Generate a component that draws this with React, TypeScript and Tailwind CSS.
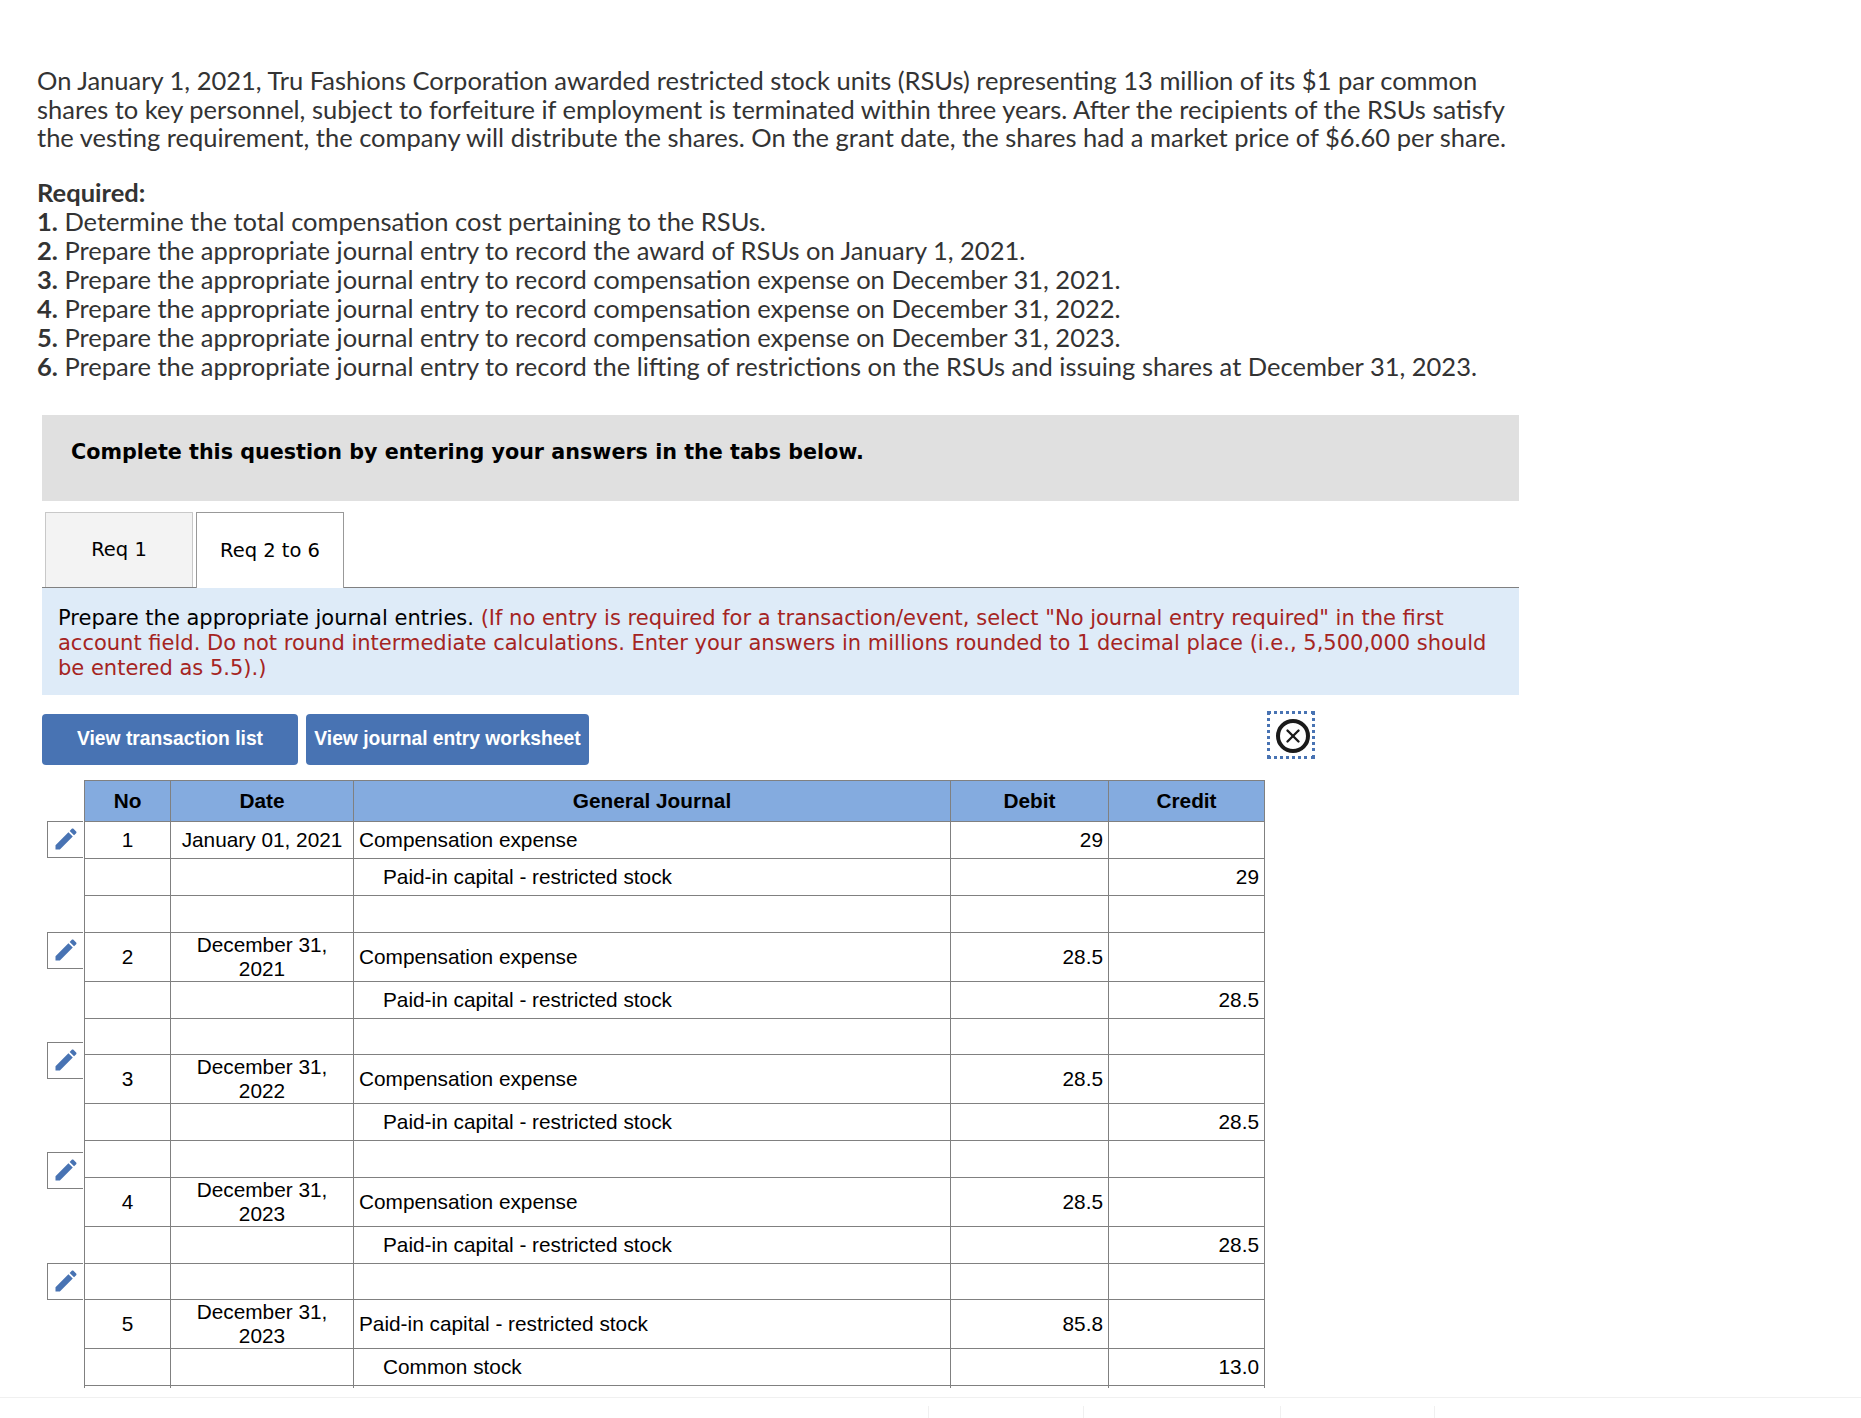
import { X } from 'lucide-react'

const requirements = [
  ['1.', 'Determine the total compensation cost pertaining to the RSUs.'],
  ['2.', 'Prepare the appropriate journal entry to record the award of RSUs on January 1, 2021.'],
  ['3.', 'Prepare the appropriate journal entry to record compensation expense on December 31, 2021.'],
  ['4.', 'Prepare the appropriate journal entry to record compensation expense on December 31, 2022.'],
  ['5.', 'Prepare the appropriate journal entry to record compensation expense on December 31, 2023.'],
  ['6.', 'Prepare the appropriate journal entry to record the lifting of restrictions on the RSUs and issuing shares at December 31, 2023.'],
]

const entries = [
  { no: 1, date: 'January 01, 2021', debitAccount: 'Compensation expense', creditAccount: 'Paid-in capital - restricted stock', debit: '29', credit: '29' },
  { no: 2, date: 'December 31, 2021', debitAccount: 'Compensation expense', creditAccount: 'Paid-in capital - restricted stock', debit: '28.5', credit: '28.5' },
  { no: 3, date: 'December 31, 2022', debitAccount: 'Compensation expense', creditAccount: 'Paid-in capital - restricted stock', debit: '28.5', credit: '28.5' },
  { no: 4, date: 'December 31, 2023', debitAccount: 'Compensation expense', creditAccount: 'Paid-in capital - restricted stock', debit: '28.5', credit: '28.5' },
  { no: 5, date: 'December 31, 2023', debitAccount: 'Paid-in capital - restricted stock', creditAccount: 'Common stock', debit: '85.8', credit: '13.0' },
]

const cell = 'border border-[#808080] p-0 align-middle'

function Pencil() {
  return (
    <svg viewBox="0 0 24 24" className="h-[28px] w-[28px] fill-[#4873b3]">
      <path d="M3 17.25V21h3.75L17.81 9.94l-3.75-3.75L3 17.25zM20.71 7.04c.39-.39.39-1.02 0-1.41l-2.34-2.34c-.39-.39-1.02-.39-1.41 0l-1.83 1.83 3.75 3.75 1.83-1.83z" />
    </svg>
  )
}

function EditButton({ className }: { className: string }) {
  return (
    <div className={`flex h-[37px] w-[36px] items-center justify-center border border-r-0 border-[#808080] ${className}`}>
      <Pencil />
    </div>
  )
}

export default function App() {
  return (
    <div className="relative h-[1418px] w-[1861px] overflow-hidden bg-white">
      <div className="px-[37px] pt-[66px] font-['Lato',sans-serif] text-[25.5px] leading-[28.7px] text-[#333]">
        <p className="w-[1490px]">
          On January 1, 2021, Tru Fashions Corporation awarded restricted stock units (RSUs) representing 13 million of its $1 par common shares to key personnel, subject to forfeiture if employment is terminated within three years. After the recipients of the RSUs satisfy the vesting requirement, the company will distribute the shares. On the grant date, the shares had a market price of $6.60 per share.
        </p>
        <div className="mt-[26px] leading-[28.95px]">
          <p className="font-bold">Required:</p>
          {requirements.map(([n, text]) => (
            <p key={n}>
              <b>{n}</b> {text}
            </p>
          ))}
        </div>
      </div>

      <div className="ml-[42px] mt-[34px] w-[1477px]">
        <div className="h-[86px] bg-[#e0e0e0] pl-[29px] pt-[25px] font-['DejaVu_Sans',sans-serif] text-[20.7px] font-bold leading-[24px] text-black">
          Complete this question by entering your answers in the tabs below.
        </div>

        <div className="mt-[11px] flex h-[76px] gap-[3px] border-b border-[#808080] pl-[3px] font-['DejaVu_Sans',sans-serif] text-[19.5px] text-black">
          <div className="flex h-[75px] w-[148px] items-center justify-center border border-b-0 border-[#c8c8c8] bg-[#f3f3f3]">Req 1</div>
          <div className="flex h-[76px] w-[148px] items-center justify-center border border-b-0 border-[#999] bg-white">Req 2 to 6</div>
        </div>

        <div className="h-[107px] bg-[#deebf8] px-[16px] pt-[18px] font-['DejaVu_Sans',sans-serif] text-[21px] leading-[25px] text-[#a52422]">
          <span className="text-black">Prepare the appropriate journal entries.</span> (If no entry is required for a transaction/event, select "No journal entry required" in the first account field. Do not round intermediate calculations. Enter your answers in millions rounded to 1 decimal place (i.e., 5,500,000 should be entered as 5.5).)
        </div>

        <div className="mt-[19px] flex items-start gap-[8px] font-['Liberation_Sans',sans-serif] text-[19.3px] font-bold text-white">
          <div className="flex h-[51px] w-[256px] items-center justify-center rounded-[4px] bg-[#4873b3] pt-[1px]">View transaction list</div>
          <div className="flex h-[51px] w-[283px] items-center justify-center rounded-[4px] bg-[#4873b3] pt-[1px]">View journal entry worksheet</div>
          <div className="ml-[670px] mt-[-3px] flex h-[48px] w-[48px] items-center justify-center border-[3px] border-dotted border-[#4873b3] pl-[3px] pt-[2px]">
            <div className="flex h-[34px] w-[34px] shrink-0 items-center justify-center rounded-full border-[4px] border-[#1a1a1a]">
              <X className="h-[22px] w-[22px] shrink-0 text-[#1a1a1a]" strokeWidth={2.6} />
            </div>
          </div>
        </div>
      </div>

      <div className="mt-[15px] flex items-start pl-[47px] font-['Liberation_Sans',sans-serif] text-[20.8px] leading-[24px] text-black">
        <div className="flex w-[37px] flex-col pt-[41px]">
          <EditButton className="" />
          <EditButton className="mt-[74px]" />
          <EditButton className="mt-[73px]" />
          <EditButton className="mt-[73px]" />
          <EditButton className="mt-[74px]" />
        </div>

        <div className="h-[608px] overflow-hidden">
          <table className="w-[1180px] table-fixed border-collapse border-spacing-0">
            <colgroup>
              <col className="w-[86px]" />
              <col className="w-[183px]" />
              <col className="w-[597px]" />
              <col className="w-[158px]" />
              <col className="w-[156px]" />
            </colgroup>
            <thead>
              <tr className="h-[41px] bg-[#84abdf] font-bold">
                <th className={cell}>No</th>
                <th className={cell}>Date</th>
                <th className={cell}>General Journal</th>
                <th className={cell}>Debit</th>
                <th className={cell}>Credit</th>
              </tr>
            </thead>
            <tbody>
              {entries.map((e) => (
                <Entry key={e.no} {...e} />
              ))}
              <tr className="h-[37px]">
                <td className={cell} />
                <td className={cell} />
                <td className={cell} />
                <td className={cell} />
                <td className={cell} />
              </tr>
            </tbody>
          </table>
        </div>
      </div>

      {/* Footer toolbar, cut off by the bottom of the page */}
      <div className="absolute bottom-0 left-0 right-0 flex h-[21px] border-t border-[#f0f0f0] pl-[928px] pt-[8px]">
        <div className="h-[13px] w-[155px] border-l border-[#f0f0f0]" />
        <div className="h-[13px] w-[197px] border-l border-[#f0f0f0]" />
        <div className="h-[13px] w-[154px] border-l border-[#f0f0f0]" />
        <div className="h-[13px] border-l border-[#f0f0f0]" />
      </div>
    </div>
  )
}

function Entry({ no, date, debitAccount, creditAccount, debit, credit }: (typeof entries)[number]) {
  return (
    <>
      <tr className={no === 1 ? 'h-[37px]' : 'h-[49px]'}>
        <td className={`${cell} text-center`}>{no}</td>
        <td className={`${cell} px-[8px] text-center leading-[23.5px]`}>{date}</td>
        <td className={`${cell} pl-[5px]`}>{debitAccount}</td>
        <td className={`${cell} pr-[5px] text-right`}>{debit}</td>
        <td className={cell} />
      </tr>
      <tr className="h-[37px]">
        <td className={cell} />
        <td className={cell} />
        <td className={`${cell} pl-[29px]`}>{creditAccount}</td>
        <td className={cell} />
        <td className={`${cell} pr-[5px] text-right`}>{credit}</td>
      </tr>
      {no < 5 && (
        <tr className={no === 2 || no === 4 ? 'h-[36px]' : 'h-[37px]'}>
          <td className={cell} />
          <td className={cell} />
          <td className={cell} />
          <td className={cell} />
          <td className={cell} />
        </tr>
      )}
    </>
  )
}
